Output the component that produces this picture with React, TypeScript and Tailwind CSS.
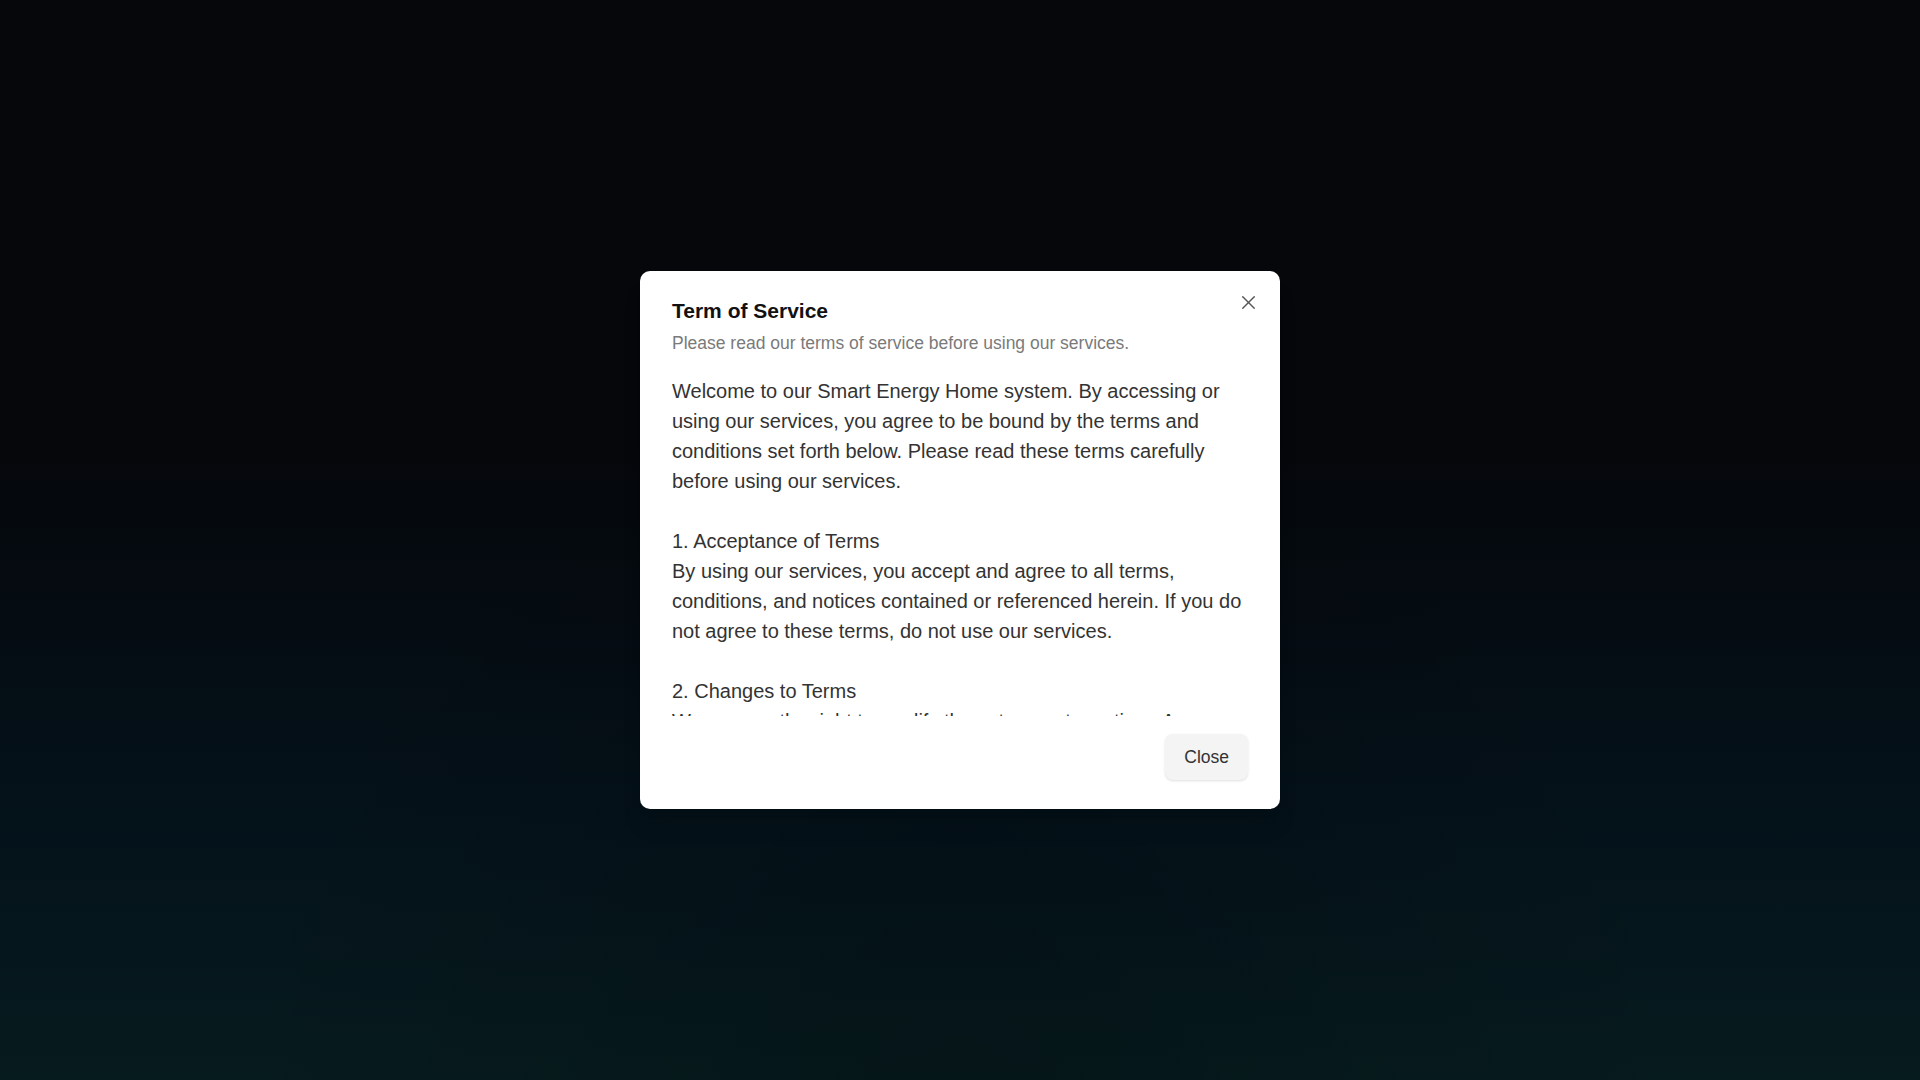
import React from 'react';
import { X } from 'lucide-react';

const terms = `Welcome to our Smart Energy Home system. By accessing or using our services, you agree to be bound by the terms and conditions set forth below. Please read these terms carefully before using our services.

1. Acceptance of Terms
By using our services, you accept and agree to all terms, conditions, and notices contained or referenced herein. If you do not agree to these terms, do not use our services.

2. Changes to Terms
We reserve the right to modify these terms at any time. Any changes will be effective immediately upon posting. Your continued use of our services after changes are posted constitutes your acceptance of the revised terms.

3. Privacy
Your use of our services is also governed by our Privacy Policy, which describes how we collect, use and protect your personal information and energy usage data.

4. Use of Devices
You are responsible for the proper installation and use of all connected devices. We are not liable for damage resulting from improper use.`;

const App: React.FC = () => {
  return (
    <div
      className="min-h-screen w-full flex items-center justify-center bg-[radial-gradient(ellipse_at_50%_100%,rgba(0,0,0,0.2)_0%,rgba(0,0,0,0)_55%),linear-gradient(to_bottom,#06070b_0%,#05070b_42%,#04121a_75%,#061b1e_100%)]"
      style={{ fontFamily: '"Liberation Sans", Arial, sans-serif' }}
    >
      {/* Dialog */}
      <div className="relative w-[640px] bg-white rounded-[10px] shadow-xl px-8 pt-[26px] pb-[29px] flex flex-col">
        <button className="absolute top-5 right-5 text-[#555] hover:text-black">
          <X size={23} strokeWidth={1.4} />
        </button>

        <h2 className="text-[21px] leading-7 font-bold text-[#111]">Term of Service</h2>
        <p className="mt-[6px] text-[17.5px] leading-6 text-[#7a7a7a]">
          Please read our terms of service before using our services.
        </p>

        <div className="mt-[21px] h-[340px] overflow-y-auto [scrollbar-width:none]">
          <p className="whitespace-pre-line text-[20px] leading-[30px] text-[#333]">{terms}</p>
        </div>

        <div className="mt-[18px] flex justify-end">
          <button className="h-[46px] px-[19px] rounded-lg bg-[#f4f4f4] text-[17.5px] text-[#333] shadow-sm hover:bg-[#ececec]">
            Close
          </button>
        </div>
      </div>
    </div>
  );
};

export default App;
